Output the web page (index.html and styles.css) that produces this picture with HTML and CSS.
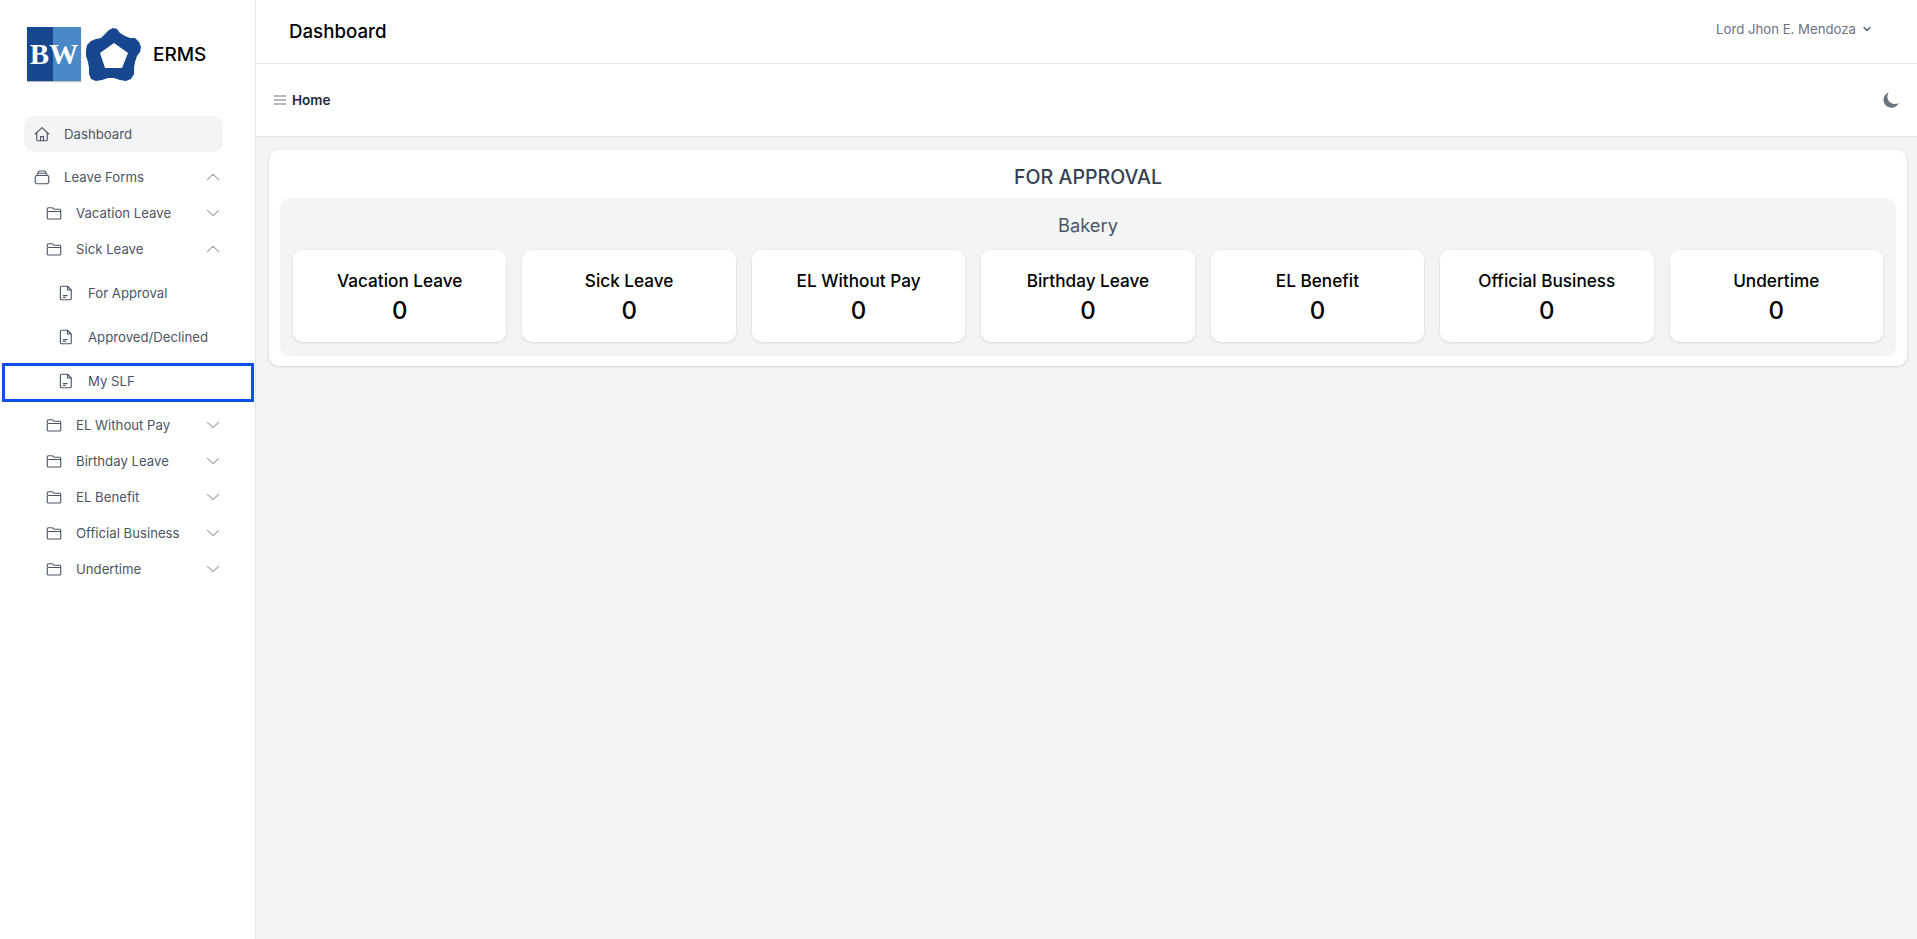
FILE: index.html
```html
<!DOCTYPE html>
<html lang="en">
<head>
<meta charset="utf-8">
<title>ERMS Dashboard</title>
<link rel="stylesheet" href="styles.css">
</head>
<body>
<svg class="defs" width="0" height="0" aria-hidden="true">
  <symbol id="i-folder" viewBox="0 0 24 24"><path d="M3 9V6.500A1.500 1.500 0 0 1 4.500 5h4.900a1.500 1.500 0 0 1 1.060.440l1.100 1.120a1.500 1.500 0 0 0 1.060.440h6.880A1.500 1.500 0 0 1 21 8.500V10M3 11.500A1.500 1.500 0 0 1 4.500 10h15a1.500 1.500 0 0 1 1.500 1.500v7a1.500 1.500 0 0 1-1.500 1.500h-15A1.500 1.500 0 0 1 3 18.500z"/></symbol>
  <symbol id="i-doc" viewBox="0 0 24 24"><path d="M6 3h8l5 5v11.500a1.500 1.500 0 0 1-1.500 1.500h-11.500a1.500 1.500 0 0 1-1.500-1.500v-15A1.500 1.500 0 0 1 6 3zM14 3v5h5"/><path class="thick" d="M8.500 15.500h5M8.500 18h2.500"/></symbol>
  <symbol id="i-down" viewBox="0 0 24 24"><path d="M4.500 8.500 12 15.500l7.500-7"/></symbol>
  <symbol id="i-up" viewBox="0 0 24 24"><path d="M4.500 15.500 12 8.500l7.500 7"/></symbol>
</svg>
<div class="app">
  <aside class="sidebar">
    <div class="brand">
      <div class="logo-square"><span class="logo-text">BW</span></div>
      <svg class="logo-penta" viewBox="85 27 56 54" aria-hidden="true">
        <path fill="#17488f" fill-rule="evenodd" d="M113 28L117 29L120 33L125 36L130 38L135 38L139 42L141 47L140 52L137 56L135 62L134 68L134 74L131 79L126 81L120 80L114 78L108 78L102 80L96 81L91 79L89 74L89 68L88 62L86 56L86 50L87 45L91 41L96 39L101 38L105 34L109 30zM114 43L100 53L105 68H122L128 53z"/>
      </svg>
      <span class="brand-name">ERMS</span>
    </div>
    <nav class="menu">
      <a class="row active">
        <svg class="icon" viewBox="0 0 24 24"><path d="M3 12 12 3.500 21 12M5 10v9.500A1.500 1.500 0 0 0 6.500 21h11a1.500 1.500 0 0 0 1.500-1.500V10M10 21v-5.500h4V21"/></svg>
        <span class="label">Dashboard</span>
      </a>
      <a class="row top">
        <svg class="icon" viewBox="0 0 24 24"><path d="M7 7V5.500A1.500 1.500 0 0 1 8.500 4h7A1.500 1.500 0 0 1 17 5.500V7M5.500 10V8.500A1.500 1.500 0 0 1 7 7h10a1.500 1.500 0 0 1 1.500 1.500V10M3 12a2 2 0 0 1 2-2h14a2 2 0 0 1 2 2v6.500a2.500 2.500 0 0 1-2.500 2.500h-13A2.500 2.500 0 0 1 3 18.500z"/></svg>
        <span class="label">Leave Forms</span>
        <svg class="chev"><use href="#i-up"/></svg>
      </a>
      <a class="row sub"><svg class="icon"><use href="#i-folder"/></svg><span class="label">Vacation Leave</span><svg class="chev"><use href="#i-down"/></svg></a>
      <a class="row sub"><svg class="icon"><use href="#i-folder"/></svg><span class="label">Sick Leave</span><svg class="chev"><use href="#i-up"/></svg></a>
      <a class="row leaf first"><svg class="icon doc"><use href="#i-doc"/></svg><span class="label">For Approval</span></a>
      <a class="row leaf"><svg class="icon doc"><use href="#i-doc"/></svg><span class="label">Approved/Declined</span></a>
      <a class="row leaf focused"><svg class="icon doc"><use href="#i-doc"/></svg><span class="label">My SLF</span></a>
      <a class="row sub after"><svg class="icon"><use href="#i-folder"/></svg><span class="label">EL Without Pay</span><svg class="chev"><use href="#i-down"/></svg></a>
      <a class="row sub"><svg class="icon"><use href="#i-folder"/></svg><span class="label">Birthday Leave</span><svg class="chev"><use href="#i-down"/></svg></a>
      <a class="row sub"><svg class="icon"><use href="#i-folder"/></svg><span class="label">EL Benefit</span><svg class="chev"><use href="#i-down"/></svg></a>
      <a class="row sub"><svg class="icon"><use href="#i-folder"/></svg><span class="label">Official Business</span><svg class="chev"><use href="#i-down"/></svg></a>
      <a class="row sub"><svg class="icon"><use href="#i-folder"/></svg><span class="label">Undertime</span><svg class="chev"><use href="#i-down"/></svg></a>
    </nav>
  </aside>
  <div class="main">
    <header class="topbar">
      <h1 class="page-title">Dashboard</h1>
      <div class="user">
        <span>Lord Jhon E. Mendoza</span>
        <svg class="user-chev" viewBox="0 0 20 20"><path d="M5 7.500 10 12.500l5-5"/></svg>
      </div>
    </header>
    <div class="toolbar">
      <div class="crumb">
        <svg class="burger" viewBox="0 0 12 10"><path d="M0 1h12M0 5h12M0 9h12"/></svg>
        <span>Home</span>
      </div>
      <svg class="moon" viewBox="0 0 16 16"><path d="M5.800.2a8 8 0 1 0 10 10.800 7.500 7.500 0 0 1-10-10.800z"/></svg>
    </div>
    <main class="content">
      <section class="panel">
        <h2 class="panel-title">FOR APPROVAL</h2>
        <div class="group">
          <h3 class="group-title">Bakery</h3>
          <div class="stats">
            <div class="stat"><div class="stat-name">Vacation Leave</div><div class="stat-num">0</div></div>
            <div class="stat"><div class="stat-name">Sick Leave</div><div class="stat-num">0</div></div>
            <div class="stat"><div class="stat-name">EL Without Pay</div><div class="stat-num">0</div></div>
            <div class="stat"><div class="stat-name">Birthday Leave</div><div class="stat-num">0</div></div>
            <div class="stat"><div class="stat-name">EL Benefit</div><div class="stat-num">0</div></div>
            <div class="stat"><div class="stat-name">Official Business</div><div class="stat-num">0</div></div>
            <div class="stat"><div class="stat-name">Undertime</div><div class="stat-num">0</div></div>
          </div>
        </div>
      </section>
    </main>
  </div>
</div>
</body>
</html>
```
FILE: styles.css
```css
* { box-sizing: border-box; }
html, body { margin: 0; height: 100%; }
body { font-family: "Inter", "Noto Sans", sans-serif; background: #f3f4f6; color: #000; overflow: hidden; }
.defs { position: absolute; }
.app { display: flex; height: 939px; }

.sidebar { width: 256px; flex: none; background: #fff; border-right: 1px solid #e5e7eb; }
.brand { display: flex; align-items: center; height: 108px; padding: 0 0 0 27px; }
.logo-square { width: 54px; height: 54px; display: flex; align-items: center; justify-content: center; background: linear-gradient(90deg, #17488f 0 26px, #4a88c7 26px); box-shadow: 0 1px 1px #bbb; }
.logo-text { font: bold 29px/1 "Liberation Serif", serif; color: #fff; }
.logo-penta { width: 56px; height: 54px; margin-left: 4px; }
.brand-name { margin-left: 12px; font-size: 19px; font-weight: 500; }

.menu { display: flex; flex-direction: column; padding: 8px 32px 0 24px; }
.row { display: flex; align-items: center; height: 36px; padding-left: 9px; color: #4b5563; font-size: 13.2px; }
.row.active { background: #f3f4f6; border-radius: 10px; }
.top { margin-top: 7px; }
.label { flex: 1; }
.icon { width: 18px; height: 18px; flex: none; margin-right: 13px; fill: none; stroke: #4b5563; stroke-width: 1.5; stroke-linecap: round; stroke-linejoin: round; }
.chev { width: 18px; height: 18px; flex: none; margin-right: 1px; fill: none; stroke: #9ca3af; stroke-width: 1.5; stroke-linecap: round; stroke-linejoin: round; }
.sub { padding-left: 21px; }
.leaf { height: 44px; padding-left: 33px; }
.first { margin-top: 4px; }
.doc .thick { stroke-width: 2; }
.focused { height: 39px; margin: 4px -31px 1px -22px; padding: 0 0 3px 52px; border: 3px solid #0b50e8; }
.after { margin-top: 4px; }

.main { flex: 1; min-width: 0; display: flex; flex-direction: column; }
.topbar { height: 64px; flex: none; display: flex; align-items: center; justify-content: space-between; padding: 0 44px 0 33px; background: #fff; border-bottom: 1px solid #e5e7eb; }
.page-title { margin: 0; font-size: 18.7px; font-weight: 500; }
.user { display: flex; align-items: center; gap: 5px; font-size: 13.2px; color: #6b7280; margin-top: -5px; }
.user-chev { width: 12px; height: 12px; fill: none; stroke: #4b5563; stroke-width: 2; stroke-linecap: round; stroke-linejoin: round; }
.toolbar { height: 73px; flex: none; display: flex; align-items: center; justify-content: space-between; padding: 0 18px 0 18px; background: #fff; border-bottom: 1px solid #e5e7eb; }
.crumb { display: flex; align-items: center; gap: 6px; font-size: 13.5px; font-weight: 600; color: #1f2937; }
.burger { width: 12px; height: 10px; fill: none; stroke: #6b7280; stroke-width: 1.2; }
.moon { width: 16px; height: 16px; fill: #6b7280; }

.content { padding: 13px 10px 0 13px; }
.panel { background: #fff; border-radius: 10px; box-shadow: 0 1px 3px rgba(0,0,0,.14); padding: 13px 11px 11px; }
.panel-title { margin: 0; height: 35px; font-size: 19.6px; font-weight: 500; line-height: 28px; text-align: center; color: #374151; }
.group { background: #f3f4f6; border-radius: 10px; box-shadow: 0 1px 2px rgba(0,0,0,.06); padding: 13px; }
.group-title { margin: 0 0 11px; height: 28px; font-size: 18.3px; font-weight: 400; line-height: 28px; text-align: center; color: #4b5563; }
.stats { display: grid; grid-template-columns: repeat(7, 1fr); gap: 16px; }
.stat { height: 92px; padding-top: 17px; background: #fff; border-radius: 10px; box-shadow: 0 1px 3px rgba(0,0,0,.12); text-align: center; }
.stat-name { font-size: 17.2px; font-weight: 500; line-height: 28px; }
.stat-num { font-size: 24px; font-weight: 500; line-height: 32px; }
```
